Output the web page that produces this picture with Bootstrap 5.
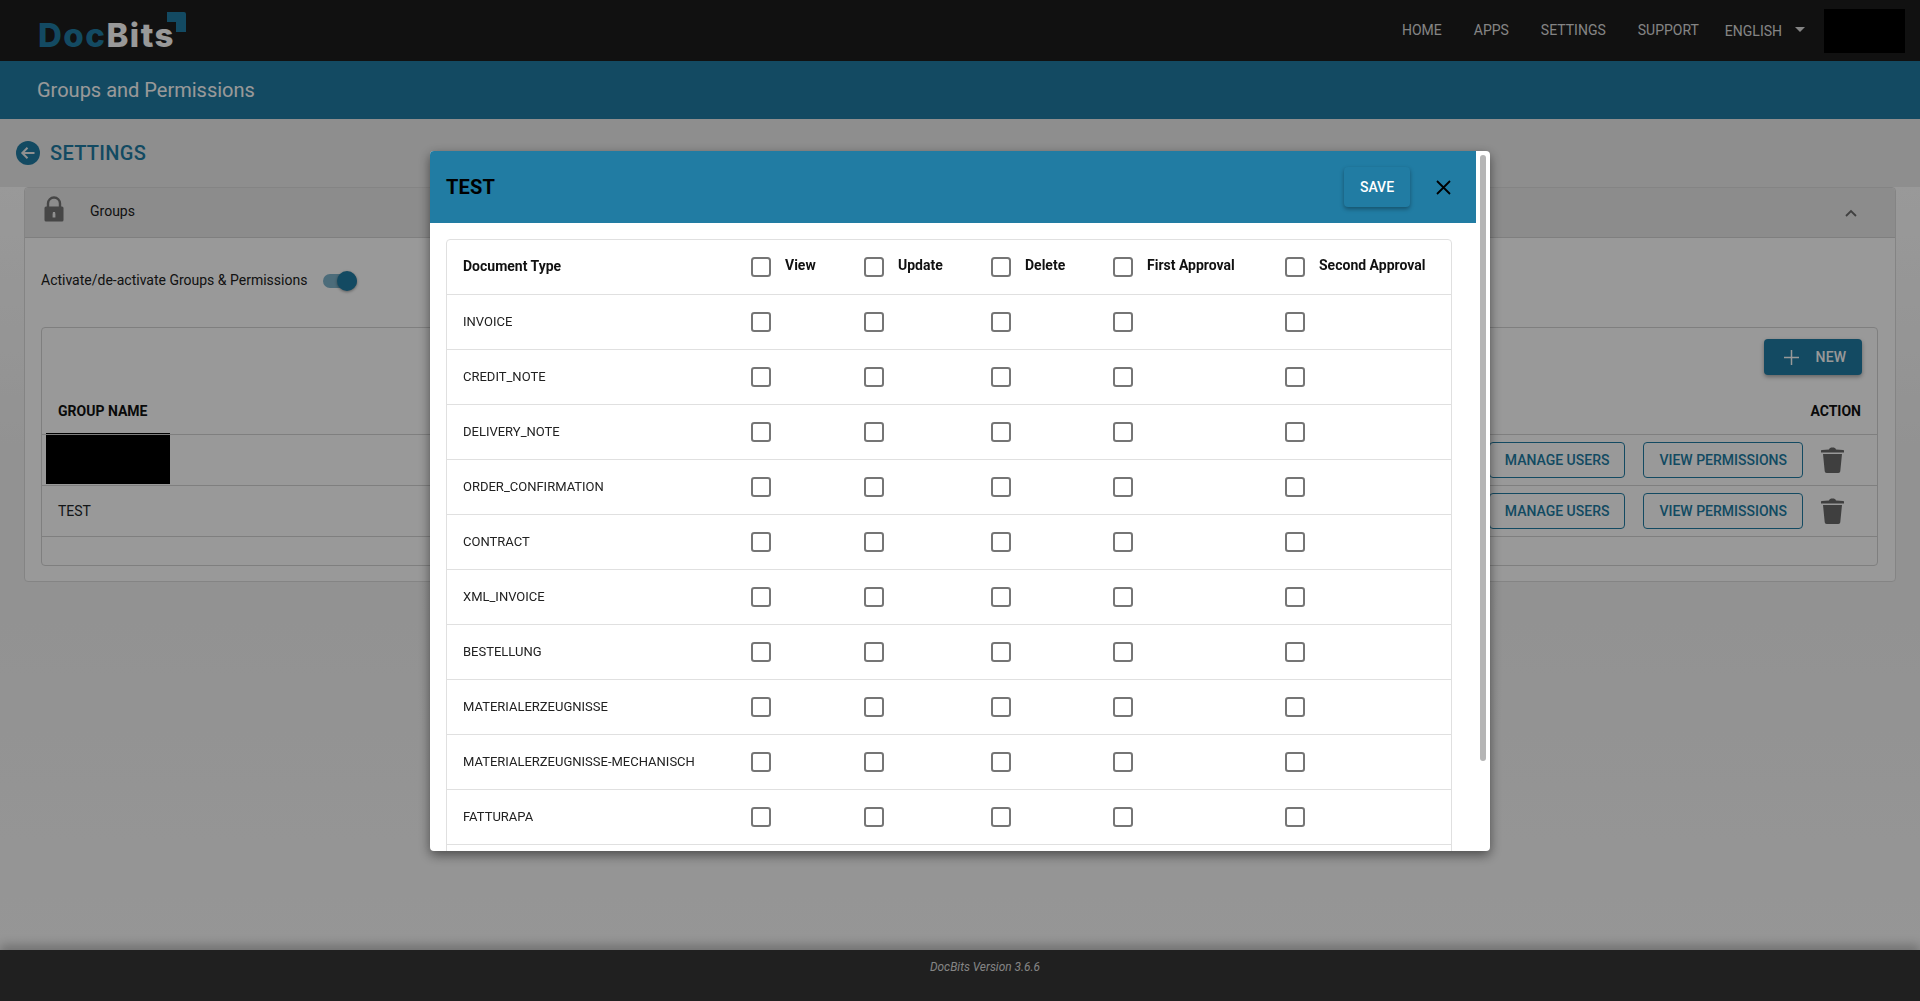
<!DOCTYPE html>
<html lang="en">
<head>
  <meta charset="UTF-8">
  <meta name="viewport" content="width=device-width, initial-scale=1.0">
  <title>DocBits - Groups and Permissions</title>
  <link href="https://cdn.jsdelivr.net/npm/bootstrap@5.3.0/dist/css/bootstrap.min.css" rel="stylesheet">
  <style>
    body {
      min-height: 1001px;
      background-color: #ededed;
      font-family: Roboto, "Liberation Sans", sans-serif;
      font-size: 14px;
      color: #212121;
    }

    /* top bars */
    .top-nav { height: 61px; padding: 0 15px 0 38px; background-color: #1d1d1d; }
    .brand-text { font-family: Inter, "Open Sans", sans-serif; font-weight: 800; font-size: 33px; line-height: 1; letter-spacing: 1.500px; }
    .brand-doc { color: #217ca3; }
    .brand-bits { color: #fff; }
    .brand-wrap { position: relative; margin-top: 10px; }
    .brand-corner { position: absolute; left: 128px; top: -7px; }
    .top-nav .navbar-nav .nav-link { padding: 0 16px; color: #ddd; font-size: 14px; text-transform: uppercase; }
    .lang-link.dropdown-toggle::after { margin-left: 13px; vertical-align: 4px; border-top-width: 5px; border-left-width: 5px; border-right-width: 5px; }
    .top-nav .navbar-nav .lang-link { padding: 2px 0 0 10px; margin-right: 19px; }
    .redact-nav { width: 81px; height: 44px; background-color: #000; }
    .title-bar { height: 58px; padding-left: 37px; background-color: #217ca3; color: #fff; font-size: 20px; }

    /* settings area */
    .settings-head { height: 68px; padding-left: 16px; gap: 10px; color: #217ca3; font-size: 20px; font-weight: 500; letter-spacing: .3px; }
    .panel-zone { background: linear-gradient(#fff 0, #f3f3f3 280px, #f3f3f3 380px, #fafafa 100%); }
    .groups-panel { margin: 0 24px; border: 1px solid #ddd; border-radius: 4px; background-color: #fff; }
    .groups-panel-head { height: 50px; padding: 0 38px 0 19px; background-color: #e9e9e9; border-bottom: 1px solid #d4d4d4; border-radius: 4px 4px 0 0; }
    .lock-icon { margin-bottom: 7px; }
    .groups-label { margin: 0 0 2px 26px; }
    .toggle-row { height: 89px; padding: 0 0 4px 16px; gap: 16px; }
    .toggle-track { position: relative; display: block; width: 34px; height: 14px; border-radius: 7px; background-color: #7fb4cb; }
    .toggle-knob { position: absolute; left: 14px; top: -3px; width: 20px; height: 20px; border-radius: 50%; background-color: #217ca3; box-shadow: 0 1px 3px rgba(0, 0, 0, .4); }
    .groups-box { margin: 0 17px 15px 16px; border: 1px solid #d4d4d4; border-radius: 4px; }
    .new-row { padding: 11px 15px 0 0; }
    .new-btn { width: 98px; height: 36px; padding: 0 0 0 4px; background-color: #217ca3; color: #fff; font-weight: 500; font-size: 14px; letter-spacing: .2px; border: 0; border-radius: 4px; box-shadow: 0 2px 4px rgba(0, 0, 0, .35); gap: 17px; }
    .groups-table { --bs-table-bg: transparent; --bs-table-border-color: #d4d4d4; margin-bottom: 28px; font-size: 14px; border-bottom: 1px solid #d4d4d4; }
    .groups-table th { height: 59px; padding: 0 16px 12px; vertical-align: bottom; font-weight: 700; color: #111; border-bottom: 1px solid #d4d4d4; }
    .groups-table td { height: 51px; padding: 0 16px; vertical-align: middle; }
    .groups-table tr:last-child td { border-bottom: 0; }
    .groups-table .name-cell { padding-top: 2px; }
    .action-group { gap: 18px; }
    .outline-action { height: 36px; padding: 1px 15px 0; border: 1px solid #217ca3; border-radius: 4px; background: none; color: #217ca3; font-weight: 500; font-size: 14px; }
    .trash-slot { width: 23px; margin-right: 17px; line-height: 0; }
    .redact-cell { width: 124px; height: 51px; margin: -2px 0 0 -12px; background-color: #000; }
    .page-footer { height: 51px; padding: 9px 0 0 50px; background-color: #363636; color: #ddd; font-size: 11.900px; font-style: italic; box-shadow: 0 -5px 10px rgba(0, 0, 0, .25); }

    /* dialog */
    .perm-dialog { max-width: 1060px; margin: 151px auto 0; }
    .perm-content { height: 700px; display: block; overflow: hidden; padding-right: 14px; border: 0; border-radius: 4px; box-shadow: 0 4px 12px rgba(0, 0, 0, .5); }
    .perm-thumb { position: absolute; top: 4px; right: 4px; width: 6px; height: 606px; border-radius: 3px; background-color: #b5b5b5; }
    .perm-head { height: 72px; padding: 0 19px 0 16px; background-color: #217ca3; }
    .perm-title { font-size: 20px; font-weight: 700; color: #000; letter-spacing: .2px; }
    .save-btn { width: 66px; height: 40px; padding: 0; border: 0; border-radius: 4px; background-color: #217ca3; color: #fff; font-weight: 500; font-size: 14px; box-shadow: 0 2px 4px rgba(0, 0, 0, .35); }
    .close-x { margin-left: 26px; margin-right: 6px; padding: 0; border: 0; background: none; line-height: 0; }
    .perm-wrap { margin: 16px 24px 16px 16px; border: 1px solid #e0e0e0; border-radius: 4px; }
    .perm-table { table-layout: fixed; margin: 0; font-size: 13px; --bs-table-border-color: #e0e0e0; }
    .perm-table td, .perm-table th { height: 55px; padding: 0 0 0 16px; vertical-align: middle; }
    .perm-table tr:last-child td { border-bottom: 0; }
    .perm-table thead th { height: 54px; font-size: 14px; font-weight: 700; color: #111; }
    .perm-table tbody td { color: #212121; }
    .w-col-type { width: 288px; }
    .w-col-view { width: 113px; }
    .w-col-update { width: 127px; }
    .w-col-delete { width: 122px; }
    .w-col-first { width: 172px; }
    .perm-check { width: 20px; height: 20px; margin: 0; border: 2px solid #757575; border-radius: 2px; float: none; display: block; }
    .head-label { margin: -2px 0 0 14px; white-space: nowrap; }
  </style>
</head>
<body class="d-flex flex-column">

  <nav class="navbar navbar-expand top-nav align-items-center">
    <div class="brand-wrap">
      <span class="brand-text"><span class="brand-doc">Doc</span><span class="brand-bits">Bits</span></span>
      <svg class="brand-corner" width="20" height="20" viewBox="0 0 20 20"><path d="M1 0H18a2 2 0 0 1 2 2V20H10V10H1Z" fill="#217ca3"/></svg>
    </div>
    <ul class="navbar-nav ms-auto align-items-center">
      <li class="nav-item"><a class="nav-link" href="#">Home</a></li>
      <li class="nav-item"><a class="nav-link" href="#">Apps</a></li>
      <li class="nav-item"><a class="nav-link" href="#">Settings</a></li>
      <li class="nav-item"><a class="nav-link" href="#">Support</a></li>
      <li class="nav-item"><a class="nav-link lang-link dropdown-toggle" href="#">English</a></li>
    </ul>
    <div class="redact-nav"></div>
  </nav>

  <div class="title-bar d-flex align-items-center">Groups and Permissions</div>

  <main class="flex-grow-1 d-flex flex-column">
    <div class="settings-head d-flex align-items-center">
      <svg width="24" height="24" viewBox="0 0 24 24"><circle cx="12" cy="12" r="12" fill="#217ca3"/><path d="M18.500 12H6.500M11.500 6.800 6.300 12l5.200 5.200" fill="none" stroke="#f0f0f0" stroke-width="2"/></svg>
      <span>SETTINGS</span>
    </div>

    <div class="panel-zone flex-grow-1">
      <section class="groups-panel">
        <div class="groups-panel-head d-flex align-items-center">
          <svg class="lock-icon" width="20" height="26" viewBox="0 0 20 26"><path d="M4 12V7.500a6 6 0 0 1 12 0V12" fill="none" stroke="#757575" stroke-width="2.400"/><path d="M2 10.500H18a1.500 1.500 0 0 1 1.500 1.500V24a1.500 1.500 0 0 1-1.500 1.500H2A1.500 1.500 0 0 1 .5 24V12A1.500 1.500 0 0 1 2 10.500Z" fill="#757575"/><path d="M9 16h2l.4 2v3.500H8.600V18Z" fill="#eee"/></svg>
          <span class="groups-label">Groups</span>
          <svg class="ms-auto" width="12" height="8" viewBox="0 0 12 8"><path d="M1 7l5-5 5 5" fill="none" stroke="#6b6b6b" stroke-width="1.800"/></svg>
        </div>
        <div class="toggle-row d-flex align-items-center">
          <span>Activate/de-activate Groups &amp; Permissions</span>
          <span class="toggle-track"><span class="toggle-knob"></span></span>
        </div>
        <div class="groups-box">
          <div class="new-row d-flex justify-content-end">
            <button class="new-btn d-flex align-items-center justify-content-center" type="button">
              <svg width="15" height="15" viewBox="0 0 15 15"><path d="M7.500 0v15M0 7.500h15" stroke="#fff" stroke-width="1.500"/></svg>
              <span>NEW</span>
            </button>
          </div>
          <table class="table groups-table">
            <thead>
              <tr><th>GROUP NAME</th><th class="text-end">ACTION</th></tr>
            </thead>
            <tbody>
              <tr>
                <td><div class="redact-cell"></div></td>
                <td>
                  <div class="action-group d-flex justify-content-end align-items-center">
                    <button class="outline-action" type="button">MANAGE USERS</button>
                    <button class="outline-action" type="button">VIEW PERMISSIONS</button>
                    <div class="trash-slot">
                      <svg width="23" height="26" viewBox="0 0 23 26"><path d="M8 2.500C8.500 1 9.500.5 11.500.5s3 .5 3.500 2l7 .5c.7 0 1 .4 1 1v1.500H0V4c0-.6.3-1 1-1Z" fill="#6a6a6a"/><path d="M2 7H21L19.300 24c-.1 1.200-.8 2-2 2H5.700c-1.200 0-1.900-.8-2-2Z" fill="#6a6a6a"/></svg>
                    </div>
                  </div>
                </td>
              </tr>
              <tr>
                <td class="name-cell">TEST</td>
                <td>
                  <div class="action-group d-flex justify-content-end align-items-center">
                    <button class="outline-action" type="button">MANAGE USERS</button>
                    <button class="outline-action" type="button">VIEW PERMISSIONS</button>
                    <div class="trash-slot">
                      <svg width="23" height="26" viewBox="0 0 23 26"><path d="M8 2.500C8.500 1 9.500.5 11.500.5s3 .5 3.500 2l7 .5c.7 0 1 .4 1 1v1.500H0V4c0-.6.3-1 1-1Z" fill="#6a6a6a"/><path d="M2 7H21L19.300 24c-.1 1.200-.8 2-2 2H5.700c-1.200 0-1.900-.8-2-2Z" fill="#6a6a6a"/></svg>
                    </div>
                  </div>
                </td>
              </tr>
            </tbody>
          </table>
        </div>
      </section>
    </div>
  </main>

  <footer class="page-footer text-center">DocBits Version 3.6.6</footer>

  <div class="modal-backdrop show" style="--bs-backdrop-opacity: .4"></div>

  <div class="modal d-block" tabindex="-1">
    <div class="modal-dialog perm-dialog">
      <div class="modal-content perm-content">
        <div class="perm-thumb"></div>
        <div class="perm-head d-flex align-items-center">
          <span class="perm-title">TEST</span>
          <button class="save-btn ms-auto" type="button">SAVE</button>
          <button class="close-x" type="button" aria-label="Close">
            <svg width="15" height="15" viewBox="0 0 15 15"><path d="M1 1l13 13M14 1 1 14" stroke="#000" stroke-width="1.800"/></svg>
          </button>
        </div>
        <div class="perm-wrap">
          <table class="table perm-table">
            <colgroup>
              <col class="w-col-type"><col class="w-col-view"><col class="w-col-update"><col class="w-col-delete"><col class="w-col-first"><col>
            </colgroup>
            <thead>
              <tr>
                <th>Document Type</th>
                <th><div class="d-flex align-items-center"><input class="form-check-input perm-check" type="checkbox"><span class="head-label">View</span></div></th>
                <th><div class="d-flex align-items-center"><input class="form-check-input perm-check" type="checkbox"><span class="head-label">Update</span></div></th>
                <th><div class="d-flex align-items-center"><input class="form-check-input perm-check" type="checkbox"><span class="head-label">Delete</span></div></th>
                <th><div class="d-flex align-items-center"><input class="form-check-input perm-check" type="checkbox"><span class="head-label">First Approval</span></div></th>
                <th><div class="d-flex align-items-center"><input class="form-check-input perm-check" type="checkbox"><span class="head-label">Second Approval</span></div></th>
              </tr>
            </thead>
            <tbody id="permRows"></tbody>
          </table>
        </div>
      </div>
    </div>
  </div>

  <script src="https://cdn.jsdelivr.net/npm/bootstrap@5.3.0/dist/js/bootstrap.bundle.min.js"></script>
  <script>
    const docTypes = ['INVOICE', 'CREDIT_NOTE', 'DELIVERY_NOTE', 'ORDER_CONFIRMATION', 'CONTRACT', 'XML_INVOICE',
      'BESTELLUNG', 'MATERIALERZEUGNISSE', 'MATERIALERZEUGNISSE-MECHANISCH', 'FATTURAPA', ''];
    const box = '<td><input class="form-check-input perm-check" type="checkbox"></td>';
    document.getElementById('permRows').innerHTML = docTypes
      .map(name => '<tr><td>' + name + '</td>' + box.repeat(5) + '</tr>')
      .join('');
  </script>
</body>
</html>
